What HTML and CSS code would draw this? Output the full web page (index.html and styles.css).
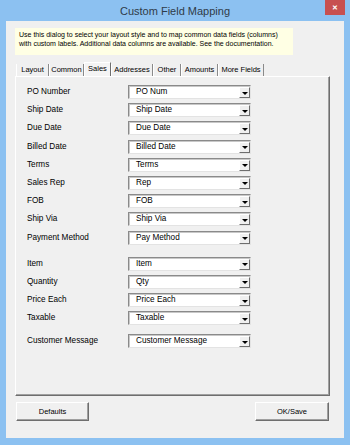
FILE: index.html
```html
<!DOCTYPE html>
<html lang="en">
<head>
    <meta charset="UTF-8">
    <title>Custom Field Mapping</title>
    <link rel="stylesheet" href="styles.css">
</head>
<body>

    <div class="window">

        <!-- Barra de titulo -->
        <div class="titlebar">
            <span></span>
            <span class="title">Custom Field Mapping</span>
            <span class="close">&#x2715;</span>
        </div>

        <div class="client">

            <div class="info-box">
                Use this dialog to select your layout style and to map common data fields (columns)<br>
                with custom labels. Additional data columns are available. See the documentation.
            </div>

            <!-- Abas -->
            <div class="tabs">
                <div class="tab t-layout">Layout</div>
                <div class="tab t-common">Common</div>
                <div class="tab t-sales active">Sales</div>
                <div class="tab t-addr">Addresses</div>
                <div class="tab t-other">Other</div>
                <div class="tab t-amounts">Amounts</div>
                <div class="tab t-more">More Fields</div>
            </div>

            <div class="panel">
                <div class="row"><span class="label">PO Number</span><div class="combo"><span>PO Num</span><i class="drop"></i></div></div>
                <div class="row"><span class="label">Ship Date</span><div class="combo"><span>Ship Date</span><i class="drop"></i></div></div>
                <div class="row"><span class="label">Due Date</span><div class="combo"><span>Due Date</span><i class="drop"></i></div></div>
                <div class="row"><span class="label">Billed Date</span><div class="combo"><span>Billed Date</span><i class="drop"></i></div></div>
                <div class="row"><span class="label">Terms</span><div class="combo"><span>Terms</span><i class="drop"></i></div></div>
                <div class="row"><span class="label">Sales Rep</span><div class="combo"><span>Rep</span><i class="drop"></i></div></div>
                <div class="row"><span class="label">FOB</span><div class="combo"><span>FOB</span><i class="drop"></i></div></div>
                <div class="row"><span class="label">Ship Via</span><div class="combo"><span>Ship Via</span><i class="drop"></i></div></div>
                <div class="row"><span class="label">Payment Method</span><div class="combo"><span>Pay Method</span><i class="drop"></i></div></div>

                <div class="group">
                    <div class="row"><span class="label">Item</span><div class="combo"><span>Item</span><i class="drop"></i></div></div>
                    <div class="row"><span class="label">Quantity</span><div class="combo"><span>Qty</span><i class="drop"></i></div></div>
                    <div class="row"><span class="label">Price Each</span><div class="combo"><span>Price Each</span><i class="drop"></i></div></div>
                    <div class="row"><span class="label">Taxable</span><div class="combo"><span>Taxable</span><i class="drop"></i></div></div>
                </div>

                <div class="group small">
                    <div class="row"><span class="label">Customer Message</span><div class="combo"><span>Customer Message</span><i class="drop"></i></div></div>
                </div>
            </div>

            <div class="buttons">
                <button class="btn btn-defaults">Defaults</button>
                <button class="btn btn-ok">OK/Save</button>
            </div>

        </div>
    </div>

</body>
</html>
```

FILE: styles.css
```css
body {
    margin: 0;
    padding: 0;
    font-family: "Liberation Sans", Arial, sans-serif;
    background: #ffffff;
}

.window {
    width: 350px;
    height: 445px;
    background: #8cc1f1;
    display: flex;
    flex-direction: column;
    box-sizing: border-box;
}

.titlebar {
    height: 21px;
    display: grid;
    grid-template-columns: 1fr auto 1fr;
    align-items: center;
}

.title {
    font-size: 11px;
    color: #2f3b48;
    padding-top: 1px;
}

.close {
    justify-self: end;
    align-self: start;
    width: 20px;
    height: 15px;
    margin-right: 5px;
    background: #c75050;
    color: #ffffff;
    font-size: 7px;
    font-weight: bold;
    text-align: center;
    line-height: 15px;
}

.client {
    flex: 1;
    margin: 0 6px 7px 6px;
    background: #f0f0f0;
    padding: 7px 0 0 9px;
    box-sizing: border-box;
}

.info-box {
    width: 278px;
    height: 27px;
    background: #ffffe4;
    font-size: 7px;
    line-height: 9px;
    padding: 2px 0 0 4px;
    box-sizing: border-box;
    color: #000;
}

/* abas */
.tabs {
    display: flex;
    align-items: flex-end;
    height: 14px;
    margin-top: 7px;
    margin-left: 1px;
}

.tab {
    height: 12px;
    font-size: 7.5px;
    line-height: 12px;
    text-align: center;
    box-sizing: border-box;
    border-left: 1px solid #ffffff;
    border-right: 1px solid #8a8a8a;
    color: #000;
}

.tab.active {
    height: 14px;
    line-height: 12px;
    background: #f4f4f4;
    border-top: 1px solid #ffffff;
    border-right: 1px solid #6e6e6e;
}

.t-layout { width: 33px; }
.t-common { width: 35px; }
.t-sales { width: 27px; }
.t-addr { width: 42px; }
.t-other { width: 28px; }
.t-amounts { width: 37px; }
.t-more { width: 46px; }

.panel {
    width: 315px;
    height: 320px;
    box-sizing: border-box;
    border-top: 1px solid #ffffff;
    border-left: 1px solid #ffffff;
    border-right: 1px solid #6e6e6e;
    border-bottom: 1px solid #6e6e6e;
    box-shadow: inset -1px -1px 0 #a0a0a0;
    padding: 8px 0 0 11px;
}

.group {
    margin-top: 8px;
}

.group.small {
    margin-top: 5px;
}

.row {
    height: 18.2px;
    display: flex;
    align-items: flex-start;
}

.label {
    width: 101px;
    font-size: 8.2px;
    line-height: 14px;
    color: #000;
}

.combo {
    width: 123px;
    height: 14px;
    box-sizing: border-box;
    background: #ffffff;
    border-top: 1px solid #8a8a8a;
    border-left: 1px solid #8a8a8a;
    border-right: 1px solid #e3e3e3;
    border-bottom: 1px solid #e3e3e3;
    box-shadow: inset 1px 1px 0 #c8c8c8;
    display: flex;
    justify-content: space-between;
    font-size: 8.2px;
    line-height: 12px;
    color: #000;
}

.combo span {
    padding-left: 7px;
}

.drop {
    width: 11px;
    height: 11px;
    margin: 1px 0 0 0;
    background: #f0f0f0;
    box-sizing: border-box;
    border-right: 1px solid #6e6e6e;
    border-bottom: 1px solid #6e6e6e;
    border-top: 1px solid #ffffff;
    border-left: 1px solid #ffffff;
    display: flex;
    justify-content: center;
    align-items: center;
}

.drop::after {
    content: "";
    width: 0;
    height: 0;
    border-left: 3px solid transparent;
    border-right: 3px solid transparent;
    border-top: 3px solid #000;
    margin-top: 1px;
}

.buttons {
    display: flex;
    justify-content: space-between;
    width: 313px;
    margin-top: 6px;
    margin-left: 1px;
}

.btn {
    height: 19px;
    padding: 0;
    font-family: "Liberation Sans", Arial, sans-serif;
    font-size: 7.5px;
    color: #000;
    background: #f0f0f0;
    box-sizing: border-box;
    border-top: 1px solid #ffffff;
    border-left: 1px solid #ffffff;
    border-right: 1px solid #6e6e6e;
    border-bottom: 1px solid #6e6e6e;
    box-shadow: inset -1px -1px 0 #a0a0a0;
}

.btn-defaults { width: 73px; }
.btn-ok { width: 74px; }
```
